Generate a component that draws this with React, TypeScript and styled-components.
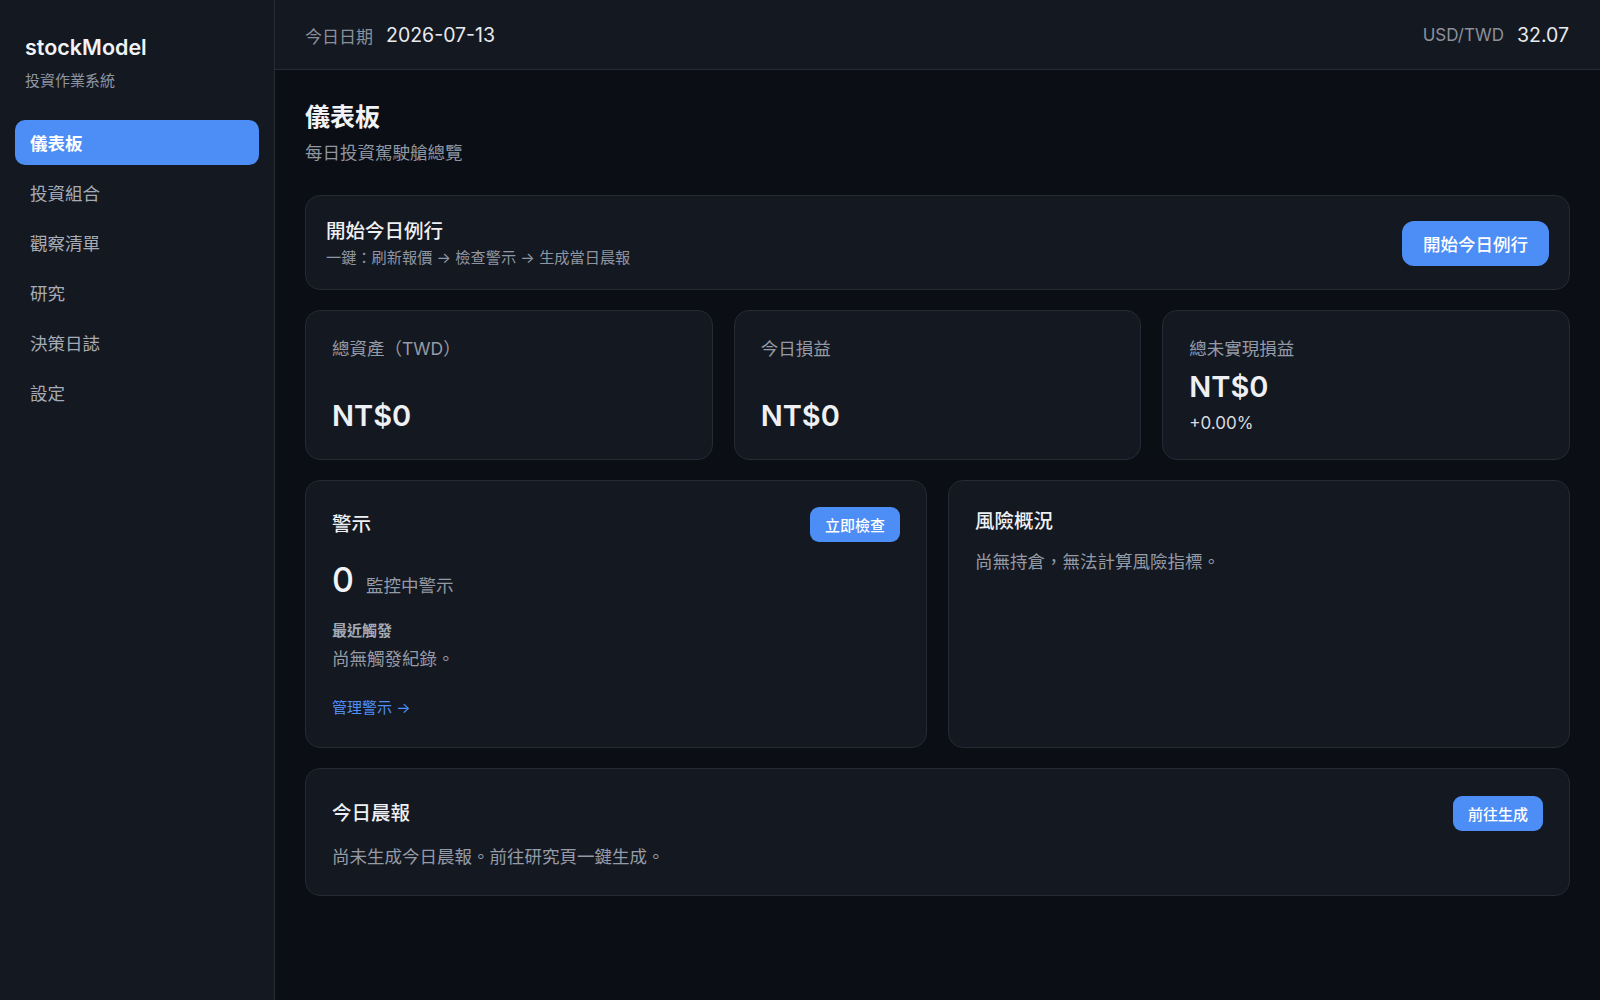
import styled, { createGlobalStyle } from "styled-components";

const GlobalStyle = createGlobalStyle`
  * {
    box-sizing: border-box;
  }
  html,
  body {
    margin: 0;
    padding: 0;
    background: #0b0e15;
  }
  body {
    font-family: Inter, "Noto Sans CJK TC", "Noto Sans", sans-serif;
    color: #eceef2;
    -webkit-font-smoothing: antialiased;
  }
`;

const Shell = styled.div`
  display: grid;
  grid-template-columns: 275px 1fr;
  min-height: 100vh;
`;

const Sidebar = styled.aside`
  background: #141820;
  border-right: 1px solid #252a35;
  padding: 33px 15px;
`;

const Brand = styled.div`
  padding: 0 10px;
`;

const BrandName = styled.div`
  font-size: 21.5px;
  font-weight: 600;
  line-height: 28px;
  color: #f0f2f5;
`;

const BrandSub = styled.div`
  margin-top: 8px;
  font-size: 15px;
  line-height: 23px;
  color: #8e95a1;
`;

const Nav = styled.nav`
  margin-top: 28px;
  display: flex;
  flex-direction: column;
  gap: 5px;
`;

const NavItem = styled.a<{ $active?: boolean }>`
  height: 45px;
  display: flex;
  align-items: center;
  padding: 0 15px;
  border-radius: 10px;
  font-size: 17.5px;
  font-weight: ${(p) => (p.$active ? 600 : 400)};
  color: ${(p) => (p.$active ? "#ffffff" : "#a6acb7")};
  background: ${(p) => (p.$active ? "#4c8df6" : "transparent")};
  cursor: pointer;
`;

const Main = styled.div`
  display: flex;
  flex-direction: column;
  min-width: 0;
`;

const TopBar = styled.header`
  height: 70px;
  background: #141820;
  border-bottom: 1px solid #252a35;
  display: flex;
  align-items: center;
  justify-content: space-between;
  padding: 1px 31px 0 30px;
`;

const TopStat = styled.div`
  display: flex;
  align-items: center;
  gap: 13px;
`;

const TopLabel = styled.span`
  font-size: 17px;
  color: #8b919c;
`;

const TopValue = styled.span`
  font-size: 19.5px;
  color: #e8eaee;
`;

const Content = styled.main`
  padding: 31px 30px 40px;
  display: flex;
  flex-direction: column;
  gap: 20px;
`;

const PageHead = styled.div`
  margin-bottom: 9px;
`;

const PageTitle = styled.h1`
  margin: 0;
  font-size: 25px;
  line-height: 33px;
  font-weight: 700;
  color: #f1f3f6;
`;

const PageSub = styled.p`
  margin: 6px 0 0;
  font-size: 17.5px;
  line-height: 26px;
  color: #8f96a2;
`;

const Card = styled.section`
  background: #141821;
  border: 1px solid #252a35;
  border-radius: 15px;
`;

const RoutineCard = styled(Card)`
  display: flex;
  align-items: center;
  justify-content: space-between;
  padding: 22px 20px 20px;
`;

const CardTitle = styled.h2`
  margin: 0;
  font-size: 19.5px;
  line-height: 27px;
  font-weight: 500;
  color: #eef0f3;
`;

const RoutineSub = styled.div`
  margin-top: 2px;
  font-size: 15.2px;
  line-height: 22px;
  color: #8f96a2;
`;

const Button = styled.button<{ $size?: "lg" | "sm" }>`
  border: none;
  background: #4c8df6;
  color: #ffffff;
  font-family: inherit;
  font-weight: 500;
  cursor: pointer;
  height: ${(p) => (p.$size === "lg" ? "45px" : "35px")};
  padding: ${(p) => (p.$size === "lg" ? "0 21px" : "0 15px")};
  border-radius: ${(p) => (p.$size === "lg" ? "12px" : "9px")};
  font-size: ${(p) => (p.$size === "lg" ? "17.5px" : "15px")};
`;

const StatGrid = styled.div`
  display: grid;
  grid-template-columns: repeat(3, 1fr);
  gap: 21px;
`;

const StatCard = styled(Card)`
  display: flex;
  flex-direction: column;
  justify-content: space-between;
  gap: 8px;
  padding: 25px 26px 26px;
`;

const StatLabel = styled.div`
  font-size: 17.5px;
  line-height: 26px;
  color: #959ba6;
`;

const StatValue = styled.div`
  font-size: 29px;
  line-height: 34px;
  font-weight: 600;
  color: #eef0f3;
`;

const StatDelta = styled.div`
  margin-top: 9px;
  font-size: 17px;
  line-height: 20px;
  color: #d8dbe0;
`;

const PanelGrid = styled.div`
  display: grid;
  grid-template-columns: repeat(2, 1fr);
  gap: 21px;
`;

const Panel = styled(Card)`
  padding: 26px 26px 28px;
`;

const PanelHead = styled.div`
  display: flex;
  align-items: center;
  justify-content: space-between;
  min-height: 28px;
`;

const CountRow = styled.div`
  margin-top: 19px;
  display: flex;
  align-items: baseline;
  gap: 12px;
`;

const CountNum = styled.span`
  font-size: 34px;
  line-height: 38px;
  font-weight: 500;
  color: #f1f3f6;
`;

const CountLabel = styled.span`
  font-size: 17.5px;
  color: #959ba6;
`;

const SectionLabel = styled.div`
  margin-top: 21px;
  font-size: 15px;
  line-height: 22px;
  font-weight: 600;
  color: #a3a9b3;
`;

const Muted = styled.p<{ $gap?: number }>`
  margin: ${(p) => p.$gap ?? 0}px 0 0;
  font-size: 17.5px;
  line-height: 26px;
  color: #959ba6;
`;

const Link = styled.a`
  display: inline-block;
  margin-top: 25px;
  font-size: 15px;
  line-height: 22px;
  color: #4f8ff7;
  cursor: pointer;
`;

const ReportCard = styled(Card)`
  padding: 27px 26px 25px;
`;

const navItems = ["儀表板", "投資組合", "觀察清單", "研究", "決策日誌", "設定"];

const stats = [
  { label: "總資產（TWD）", value: "NT$0" },
  { label: "今日損益", value: "NT$0" },
  { label: "總未實現損益", value: "NT$0", delta: "+0.00%" },
];

export default function App() {
  return (
    <>
      <GlobalStyle />
      <Shell>
        <Sidebar>
          <Brand>
            <BrandName>stockModel</BrandName>
            <BrandSub>投資作業系統</BrandSub>
          </Brand>
          <Nav>
            {navItems.map((item, i) => (
              <NavItem key={item} $active={i === 0}>
                {item}
              </NavItem>
            ))}
          </Nav>
        </Sidebar>
        <Main>
          <TopBar>
            <TopStat>
              <TopLabel>今日日期</TopLabel>
              <TopValue>2026-07-13</TopValue>
            </TopStat>
            <TopStat>
              <TopLabel>USD/TWD</TopLabel>
              <TopValue>32.07</TopValue>
            </TopStat>
          </TopBar>
          <Content>
            <PageHead>
              <PageTitle>儀表板</PageTitle>
              <PageSub>每日投資駕駛艙總覽</PageSub>
            </PageHead>

            <RoutineCard>
              <div>
                <CardTitle>開始今日例行</CardTitle>
                <RoutineSub>一鍵：刷新報價 → 檢查警示 → 生成當日晨報</RoutineSub>
              </div>
              <Button $size="lg">開始今日例行</Button>
            </RoutineCard>

            <StatGrid>
              {stats.map((s) => (
                <StatCard key={s.label}>
                  <StatLabel>{s.label}</StatLabel>
                  <div>
                    <StatValue>{s.value}</StatValue>
                    {s.delta && <StatDelta>{s.delta}</StatDelta>}
                  </div>
                </StatCard>
              ))}
            </StatGrid>

            <PanelGrid>
              <Panel>
                <PanelHead>
                  <CardTitle>警示</CardTitle>
                  <Button $size="sm">立即檢查</Button>
                </PanelHead>
                <CountRow>
                  <CountNum>0</CountNum>
                  <CountLabel>監控中警示</CountLabel>
                </CountRow>
                <SectionLabel>最近觸發</SectionLabel>
                <Muted $gap={4}>尚無觸發紀錄。</Muted>
                <Link>管理警示 →</Link>
              </Panel>
              <Panel>
                <PanelHead>
                  <CardTitle>風險概況</CardTitle>
                </PanelHead>
                <Muted $gap={14}>尚無持倉，無法計算風險指標。</Muted>
              </Panel>
            </PanelGrid>

            <ReportCard>
              <PanelHead>
                <CardTitle>今日晨報</CardTitle>
                <Button $size="sm">前往生成</Button>
              </PanelHead>
              <Muted $gap={13}>尚未生成今日晨報。前往研究頁一鍵生成。</Muted>
            </ReportCard>
          </Content>
        </Main>
      </Shell>
    </>
  );
}
